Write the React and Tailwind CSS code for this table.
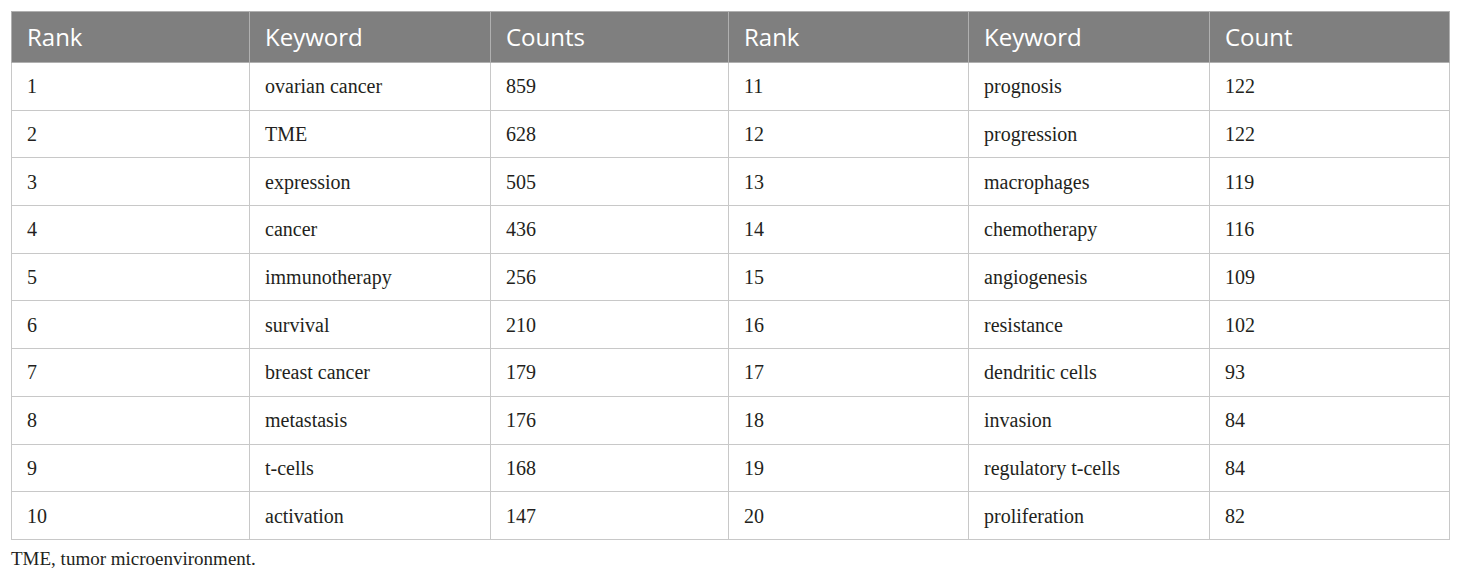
import React from "react";

const left = [
  ["1", "ovarian cancer", "859"],
  ["2", "TME", "628"],
  ["3", "expression", "505"],
  ["4", "cancer", "436"],
  ["5", "immunotherapy", "256"],
  ["6", "survival", "210"],
  ["7", "breast cancer", "179"],
  ["8", "metastasis", "176"],
  ["9", "t-cells", "168"],
  ["10", "activation", "147"],
];
const right = [
  ["11", "prognosis", "122"],
  ["12", "progression", "122"],
  ["13", "macrophages", "119"],
  ["14", "chemotherapy", "116"],
  ["15", "angiogenesis", "109"],
  ["16", "resistance", "102"],
  ["17", "dendritic cells", "93"],
  ["18", "invasion", "84"],
  ["19", "regulatory t-cells", "84"],
  ["20", "proliferation", "82"],
];

const headers = ["Rank", "Keyword", "Counts", "Rank", "Keyword", "Count"];

export default function App() {
  return (
    <div className="bg-white w-[1460px] h-[577px] pt-[11px] pl-[11px]">
      <table className="table-fixed border-collapse w-[1438px]">
        <colgroup>
          <col className="w-[238px]" />
          <col className="w-[241px]" />
          <col className="w-[238px]" />
          <col className="w-[240px]" />
          <col className="w-[241px]" />
          <col className="w-[240px]" />
        </colgroup>
        <thead>
          <tr className="h-[51px] bg-[#7f7f7f]">
            {headers.map((h, i) => (
              <th
                key={i}
                className="border border-[#b0b0b0] text-left font-normal text-white pl-[15px] text-[24px] font-['Open_Sans',sans-serif] leading-none"
              >
                {h}
              </th>
            ))}
          </tr>
        </thead>
        <tbody>
          {left.map((r, i) => {
            const cells = [...r, ...right[i]];
            return (
              <tr key={i} className="h-[47.7px]">
                {cells.map((c, j) => (
                  <td
                    key={j}
                    className="border border-[#c8c8c8] pl-[15px] text-[20px] text-[#231f20] font-['Liberation_Serif',serif] leading-none"
                  >
                    {c}
                  </td>
                ))}
              </tr>
            );
          })}
        </tbody>
      </table>
      <p className="mt-[8px] text-[19px] text-[#231f20] font-['Liberation_Serif',serif] leading-[22px]">
        TME, tumor microenvironment.
      </p>
    </div>
  );
}
